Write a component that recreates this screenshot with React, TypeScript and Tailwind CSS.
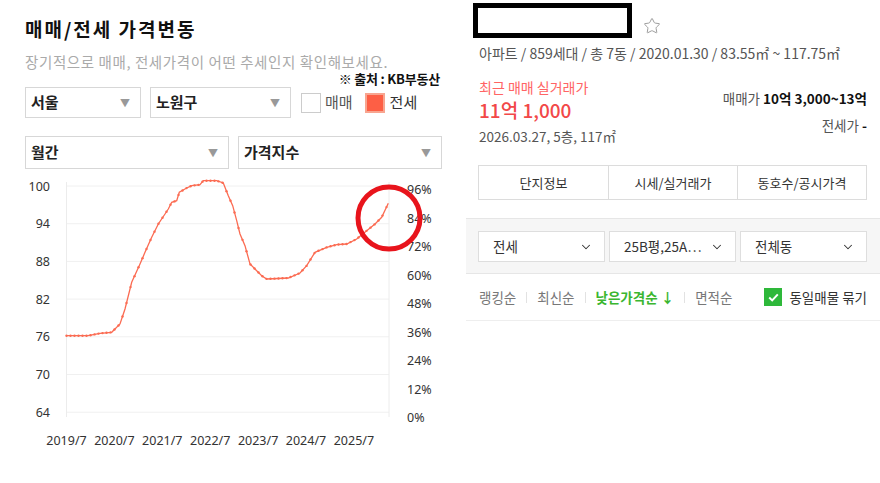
import { Star, ChevronDown } from "lucide-react";

const LINE = "#fb6b52";

const pts: [number, number][] = [
  [66.5, 336.7], [88, 336.7], [100, 334.3], [111.7, 333.3], [120, 325], [125, 310],
  [131.7, 283.3], [140, 265], [145, 253.3], [151.7, 238.3], [158.3, 225], [165, 215],
  [168.3, 210], [171.7, 203.3], [176.7, 201.7], [179.3, 193.3], [186.7, 189], [191.7, 186.7],
  [200, 185.7], [203.3, 181.7], [216.7, 181.7], [223.3, 184], [228.3, 196.7], [232.7, 206.7],
  [236.7, 221.7], [240, 235], [245, 246.7], [250, 265], [256.7, 271.7], [261.7, 276.7],
  [266.7, 280], [288.3, 279], [300, 274], [306.7, 266.7], [315, 253.3], [326.7, 248.3],
  [336.7, 245.7], [346.7, 245], [356.7, 240], [366.7, 231.7], [375, 225], [381.7, 218.3],
  [388.3, 204.3],
];

function yAt(x: number) {
  for (let i = 1; i < pts.length; i++) {
    const [x0, y0] = pts[i - 1];
    const [x1, y1] = pts[i];
    if (x <= x1) return y0 + ((x - x0) / (x1 - x0)) * (y1 - y0);
  }
  return pts[pts.length - 1][1];
}

const marks = Array.from({ length: 81 }, (_, m) => {
  const x = 66.5 + m * 4.0;
  return [x, yAt(x)] as [number, number];
});

const leftTicks = ["100", "94", "88", "82", "76", "70", "64"];
const rightTicks = ["96%", "84%", "72%", "60%", "48%", "36%", "24%", "12%", "0%"];
const years = ["2019/7", "2020/7", "2021/7", "2022/7", "2023/7", "2024/7", "2025/7"];

function Chart() {
  return (
    <svg width="440" height="290" viewBox="0 172 440 290" className="block -ml-[25px] mt-[2px]">
      {leftTicks.map((t, i) => {
        const y = 187 + i * 37.7;
        return (
          <g key={t}>
            <line x1="66.5" x2="389" y1={y} y2={y} stroke="#f0f0f0" strokeWidth="1" />
            <text x="50" y={y + 4.5} textAnchor="end" fontSize="12.5" fill="#333" fontFamily="'Noto Sans', sans-serif">
              {t}
            </text>
          </g>
        );
      })}
      <line x1="66.5" x2="66.5" y1="183" y2="418" stroke="#ececec" />
      <line x1="389" x2="389" y1="183" y2="418" stroke="#ececec" />
      {rightTicks.map((t, i) => (
        <text key={t} x="407" y={190.5 + i * 28.5 + 4.5} fontSize="12.5" fill="#333" fontFamily="'Noto Sans', sans-serif">
          {t}
        </text>
      ))}
      {years.map((t, i) => (
        <text key={t} x={66.5 + i * 47.9} y="446" textAnchor="middle" fontSize="12.5" fill="#333" fontFamily="'Noto Sans', sans-serif">
          {t}
        </text>
      ))}
      <polyline points={pts.map((p) => p.join(",")).join(" ")} fill="none" stroke={LINE} strokeWidth="1.3" />
      {marks.map(([x, y], i) => (
        <circle key={i} cx={x} cy={y} r="1.2" fill={LINE} />
      ))}
      <circle cx="389" cy="219" r="31" fill="none" stroke="#e8141c" strokeWidth="5" />
    </svg>
  );
}

function TriSelect({ label, w, h }: { label: string; w: string; h: string }) {
  return (
    <div className={`${w} ${h} flex items-center justify-between border border-[#d7d7d7] bg-white pl-[5px] pr-[10px]`}>
      <span className="text-[15px] font-semibold text-[#222]">{label}</span>
      <span className="text-[10px] text-[#999]">▼</span>
    </div>
  );
}

function BandSelect({ label }: { label: string }) {
  return (
    <div className="flex h-[31px] w-[127px] items-center justify-between border border-[#dedede] bg-white pl-[14px] pr-[11px]">
      <span className="text-[13.5px] text-[#333] whitespace-nowrap">{label}</span>
      <ChevronDown size={14} strokeWidth={1.8} color="#333" />
    </div>
  );
}

export default function App() {
  return (
    <div className="flex h-[483px] w-[880px] overflow-hidden bg-white font-['Noto_Sans_CJK_KR','Noto_Sans',sans-serif]">
      {/* left: 가격변동 */}
      <div className="w-[466px] shrink-0 pl-[25px] pr-[24px]">
        <h2 className="pt-[17px] text-[19px] font-bold leading-[24px] tracking-[2px] text-[#111]">매매/전세 가격변동</h2>
        <p className="mt-[12px] text-[14.5px] leading-[18px] tracking-[0.6px] text-[#aaa]">장기적으로 매매, 전세가격이 어떤 추세인지 확인해보세요.</p>
        <p className="mt-[1px] pr-[2px] text-right text-[13px] font-bold leading-[14px] tracking-[-0.2px] text-[#111]">※ 출처 : KB부동산</p>
        <div className="mt-[1px] flex items-center">
          <TriSelect label="서울" w="w-[116px]" h="h-[31px]" />
          <div className="ml-[9px]">
            <TriSelect label="노원구" w="w-[141px]" h="h-[31px]" />
          </div>
          <span className="ml-[10px] h-[20px] w-[20px] border border-[#ccc] bg-white" />
          <span className="ml-[4px] text-[15px] text-[#555]">매매</span>
          <span className="ml-[12px] h-[20px] w-[20px] border-2 border-[#f8a590] bg-[#fd5f45]" />
          <span className="ml-[5px] text-[15px] text-[#333]">전세</span>
        </div>
        <div className="mt-[18px] flex gap-[9px]">
          <TriSelect label="월간" w="w-[204px]" h="h-[33px]" />
          <TriSelect label="가격지수" w="w-[204px]" h="h-[33px]" />
        </div>
        <Chart />
      </div>

      {/* right: 단지 */}
      <div className="flex-1">
        <div className="flex items-end pl-[7px] pt-[3px]">
          <div className="h-[35px] w-[159px] border-[5px] border-black bg-white" />
          <Star size={18} strokeWidth={1.3} color="#9a9a9a" className="mb-[3px] ml-[11px]" />
        </div>
        <p className="mt-[6px] pl-[13px] text-[14px] leading-[18px] tracking-[0px] text-[#555]">
          아파트 / 859세대 / 총 7동 / 2020.01.30 / 83.55㎡ ~ 117.75㎡
        </p>
        <div className="flex justify-between pl-[13px] pr-[13px]">
          <div>
            <p className="mt-[16px] text-[14px] leading-[18px] text-[#ff6464]">최근 매매 실거래가</p>
            <p className="mt-[2px] text-[19px] font-medium leading-[24px] text-[#f24848]">11억 1,000</p>
            <p className="mt-[5px] text-[13.5px] leading-[18px] text-[#555]">2026.03.27, 5층, 117㎡</p>
          </div>
          <div className="text-right">
            <p className="mt-[27px] text-[13.5px] leading-[18px] text-[#555]">
              매매가 <span className="font-bold text-[#111]">10억 3,000~13억</span>
            </p>
            <p className="mt-[9px] text-[13.5px] leading-[18px] text-[#555]">
              전세가 <span className="font-bold text-[#111]">-</span>
            </p>
          </div>
        </div>
        <div className="mx-[12px] mt-[20px] grid h-[35px] w-[389px] grid-cols-3 border border-[#dcdcdc]">
          <div className="flex items-center justify-center text-[13px] text-[#333]">단지정보</div>
          <div className="flex items-center justify-center border-l border-[#dcdcdc] text-[13px] text-[#333]">시세/실거래가</div>
          <div className="flex items-center justify-center border-l border-[#dcdcdc] text-[13px] text-[#333]">동호수/공시가격</div>
        </div>
        <div className="mt-[18px] flex h-[56px] gap-[4px] border-y border-[#e6e6e6] bg-[#f6f6f6] pl-[12px] pt-[12px]">
          <BandSelect label="전세" />
          <BandSelect label="25B평,25A…" />
          <BandSelect label="전체동" />
        </div>
        <div className="flex h-[47px] items-center border-b border-[#eeeeee] pl-[13px] pr-[13px] text-[13.5px]">
          <span className="text-[#777]">랭킹순</span>
          <span className="mx-[10px] h-[11px] w-px bg-[#e2e2e2]" />
          <span className="text-[#777]">최신순</span>
          <span className="mx-[10px] h-[11px] w-px bg-[#e2e2e2]" />
          <span className="font-bold text-[#3bb62f]">낮은가격순 ↓</span>
          <span className="mx-[10px] h-[11px] w-px bg-[#e2e2e2]" />
          <span className="text-[#777]">면적순</span>
          <span className="ml-auto flex items-center">
            <span className="flex h-[18px] w-[18px] items-center justify-center bg-[#2eb83a]">
              <svg width="11" height="9" viewBox="0 0 11 9">
                <path d="M1.2 4.6 L4.2 7.4 L9.8 1.4" fill="none" stroke="#fff" strokeWidth="2" />
              </svg>
            </span>
            <span className="ml-[7px] text-[#333]">동일매물 묶기</span>
          </span>
        </div>
      </div>
    </div>
  );
}
